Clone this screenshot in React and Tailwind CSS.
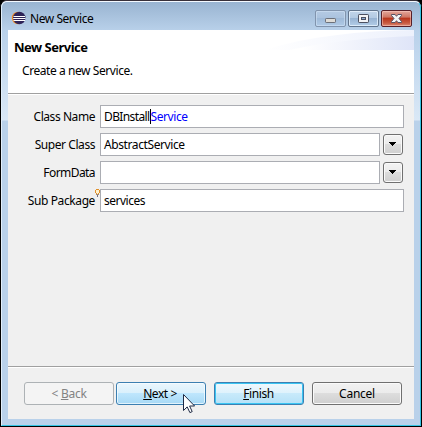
import React from "react";

function EclipseIcon() {
  return (
    <svg width="16" height="16" viewBox="0 0 16 16" className="shrink-0">
      <circle cx="7" cy="8" r="6.200" fill="#f08a24" />
      <circle cx="8.300" cy="8" r="6.200" fill="#2d2358" />
      <path d="M2.500 6.500h11.500M2.200 8.500h12.300M2.500 10.500h11.500" stroke="#fff" strokeWidth="1" />
    </svg>
  );
}

function TitleButton({ kind }) {
  const tone =
    kind === "close"
      ? "border-[#571f28] bg-[linear-gradient(#e3a79c_0%,#cf7563_42%,#b8331a_46%,#c85a40_80%,#dc8a76_100%)] shadow-[inset_0_0_0_1px_rgba(255,210,200,0.5)]"
      : kind === "min"
        ? "border-[#8194ad] bg-[linear-gradient(#b4cae3_0%,#abc3de_45%,#9fbad8_50%,#b0cae6_100%)] shadow-[inset_0_0_0_1px_rgba(220,235,250,0.45)]"
        : "border-[#62758d] bg-[linear-gradient(#c2d5ea_0%,#b3cae3_45%,#98b4d3_50%,#b3cde8_100%)] shadow-[inset_0_0_0_1px_rgba(235,245,255,0.75)]";
  return (
    <div className={"h-[17px] w-[31px] rounded-[2px] border " + tone}>
      <svg width="29" height="15" viewBox="0 0 29 15">
        {kind === "min" && (
          <rect x="9.5" y="7.5" width="10" height="4" rx="0.7" fill="#dedcd7" stroke="#6c7079" />
        )}
        {kind === "max" && (
          <>
            <rect x="9.5" y="3.5" width="10" height="8" rx="0.7" fill="#f3f3f5" stroke="#4c5060" />
            <rect x="12.5" y="6.5" width="4" height="2" fill="#8daad0" stroke="#4c5060" />
          </>
        )}
        {kind === "close" && (
          <path
            d="M9.500 3.500h3.600l1.400 1.800 1.400-1.800h3.600v1L17 7.500l2.500 3v1h-3.600l-1.400-1.800-1.400 1.800H9.500v-1l2.500-3-2.500-3z"
            fill="#f3f3f5"
            stroke="#575264"
          />
        )}
      </svg>
    </div>
  );
}

function DropButton() {
  return (
    <button className="mt-px ml-[3px] flex h-[21px] w-5 items-center justify-center rounded-[3px] border border-[#707070] bg-[linear-gradient(#f3f3f3_0%,#ebebeb_48%,#dcdcdc_50%,#cfcfcf_100%)] shadow-[inset_0_0_0_1px_#fafafa]">
      <svg width="8" height="4" viewBox="0 0 8 4" shapeRendering="crispEdges" className="-mt-px">
        <path d="M0 0h7v1H0zM1 1h5v1H1zM2 2h3v1H2zM3 3h1v1H3z" />
      </svg>
    </button>
  );
}

function Row({ label, labelClass, wide, drop, hint, children }) {
  return (
    <div className="flex h-[23px]">
      <div className="relative flex w-[92px] items-center justify-end pr-[5px]">
        <span className={labelClass}>{label}</span>
        {hint && (
          <svg width="5" height="8" viewBox="0 0 5 8" shapeRendering="crispEdges" className="absolute top-0 right-0">
            <path d="M1 1h3v4H1z" fill="#fff3cf" />
            <path d="M1 0h3v1H1zM0 1h1v3H0zM4 1h1v3H4zM1 4h1v1H1zM3 4h1v1H3z" fill="#e0902c" />
            <path d="M1 5h3v1H1z" fill="#a98a6c" />
            <path d="M2 6h1v2H2z" fill="#6f6f86" />
          </svg>
        )}
      </div>
      <div
        className={
          "flex h-[23px] items-center border border-[#abadb3] bg-white pl-[3px] " +
          (wide ? "w-[304px]" : "w-[280px]")
        }
      >
        {children}
      </div>
      {drop && <DropButton />}
    </div>
  );
}

function PushButton({ className, children }) {
  return (
    <button className={"flex h-[23px] w-[90px] items-center justify-center rounded-[3px] border " + className}>
      {children}
    </button>
  );
}

export default function App() {
  return (
    <div className="relative h-[427px] w-[422px] overflow-hidden bg-black font-['Noto_Sans','Open_Sans',sans-serif] text-[12px] leading-4 whitespace-nowrap text-black">
      <div className="flex h-[427px] w-[422px] flex-col rounded-t-[7px] border border-t-[#383039] border-r-black border-b-black border-l-black bg-[#b9d1ea]">
        <div className="flex h-[425px] flex-col rounded-t-[6px] border border-t-[#f4f9ff] border-r-[#35c5e4] border-b-[#35c5e4] border-l-[#e2effb] bg-[linear-gradient(#99b4d1_0px,#b9d1ea_29px,#c4d9ef_60px,#dae8f6_118px,#b9d1ea_119px)] px-[6px]">
          <header className="flex h-[28px] items-start pl-[3px]">
            <div className="pt-[8px]">
              <EclipseIcon />
            </div>
            <span className="ml-[3px] pt-[9px] tracking-[-0.45px]">New Service</span>
            <div className="mt-[8px] ml-auto flex gap-[2px] pr-[2px]">
              <TitleButton kind="min" />
              <TitleButton kind="max" />
              <TitleButton kind="close" />
            </div>
          </header>
          <main className="flex h-[389px] w-[406px] flex-col bg-[#f0f0f0]">
            <section className="relative h-[63px] bg-white">
              <svg width="150" height="20" className="absolute top-0 right-0">
                <defs>
                  <linearGradient id="sweep">
                    <stop offset="0.1" stopColor="#fff" />
                    <stop offset="1" stopColor="#dfe5f8" />
                  </linearGradient>
                  <linearGradient id="glow">
                    <stop offset="0" stopColor="#fff" />
                    <stop offset="1" stopColor="#edf1fc" />
                  </linearGradient>
                </defs>
                <path d="M0 20C45 6 95 1 150 0V20z" fill="url(#glow)" />
                <path d="M25 20C65 11 105 8 150 6V20z" fill="url(#sweep)" />
              </svg>
              <h1 className="relative pt-[9px] pl-[6px] text-[13px] font-bold tracking-[-0.5px]">New Service</h1>
              <p className="relative mt-[8px] pl-[14px] tracking-[-0.43px]">Create a new Service.</p>
            </section>
            <div className="h-[2px] border-t border-b border-t-[#a0a0a0] border-b-white" />
            <section className="flex h-[271px] flex-col gap-[5px] pt-[10px]">
              <Row label="Class Name" labelClass="tracking-[-0.44px]" wide>
                <span className="tracking-[-0.62px]">DBInstall</span>
                <span className="-mr-px ml-px h-[15px] w-px bg-black" />
                <span className="tracking-[-0.4px] text-[#0000ff]">Service</span>
              </Row>
              <Row label="Super Class" labelClass="tracking-[-0.44px]" drop>
                <span className="tracking-[-0.4px]">AbstractService</span>
              </Row>
              <Row label="FormData" labelClass="tracking-[-0.57px]" drop />
              <Row label="Sub Package" labelClass="tracking-[-0.4px]" wide hint>
                <span className="tracking-[-0.5px]">services</span>
              </Row>
            </section>
            <div className="h-[2px] border-t border-b border-t-[#a0a0a0] border-b-white" />
            <footer className="flex pt-[14px] pl-[16px]">
              <PushButton className="border-[#adb2b5] bg-[#f4f4f4] text-[#838383] tracking-[-0.25px]">
                <span>&lt; <u>B</u>ack</span>
              </PushButton>
              <PushButton className="ml-[2px] border-[#3c7fb1] bg-[linear-gradient(#eaf6fd_0%,#d9f0fc_48%,#bee6fd_50%,#a7d9f5_100%)] shadow-[inset_0_0_0_1px_rgba(250,253,255,0.7)] tracking-[-0.45px]">
                <span className="-ml-[2px]"><u>N</u>ext &gt;</span>
              </PushButton>
              <PushButton className="ml-[8px] border-[#3c7fb1] bg-[linear-gradient(#eff8fd_0%,#def2fc_48%,#c8eafb_50%,#b5e1f7_100%)] shadow-[inset_0_0_0_1px_#39c5f3] tracking-[-0.4px]">
                <span className="-ml-px"><u>F</u>inish</span>
              </PushButton>
              <PushButton className="ml-[8px] border-[#707070] bg-[linear-gradient(#f2f2f2_0%,#ebebeb_48%,#dddddd_50%,#cfcfcf_100%)] shadow-[inset_0_0_0_1px_#fafafa] tracking-[-0.25px]">
                <span>Cancel</span>
              </PushButton>
            </footer>
          </main>
        </div>
      </div>
      <svg width="13" height="20" viewBox="0 0 13 20" className="absolute top-[394px] left-[183px]">
        <path d="M.5.5v16l3.700-3.600 2.700 5.700 2.300-1-2.600-5.600h5z" fill="#fff" stroke="#1f2a44" />
      </svg>
    </div>
  );
}
